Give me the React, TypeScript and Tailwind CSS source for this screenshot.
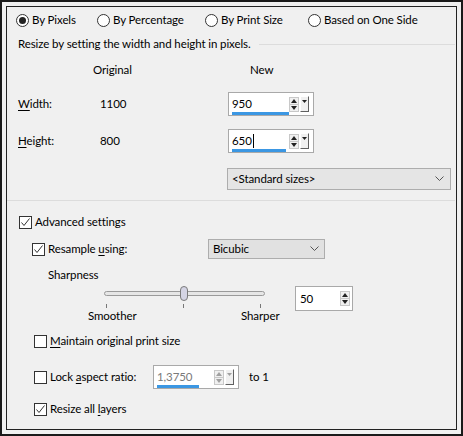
import type { ReactNode } from 'react'

function Radio({ checked, label, width }: { checked?: boolean; label: string; width: string }) {
  return (
    <div className={`flex items-center ${width}`}>
      <span className="w-[13px] h-[13px] rounded-full border border-[#333] bg-white flex items-center justify-center shrink-0">
        {checked && <span className="w-[7px] h-[7px] rounded-full bg-[#222]" />}
      </span>
      <span className="ml-[3px]">{label}</span>
    </div>
  )
}

function Check({ checked, children }: { checked?: boolean; children: ReactNode }) {
  return (
    <div className="flex items-center">
      <span className="w-[13px] h-[13px] border border-[#333] bg-white flex items-center justify-center shrink-0">
        {checked && (
          <svg width="11" height="11" viewBox="0 0 11 11">
            <path d="M1.5 5.5 L4 8.5 L9.5 1.5" fill="none" stroke="#333" strokeWidth="1" />
          </svg>
        )}
      </span>
      <span className="ml-[3px]">{children}</span>
    </div>
  )
}

function U({ children }: { children: ReactNode }) {
  return <span className="underline underline-offset-2">{children}</span>
}

function SpinArrows({ disabled }: { disabled?: boolean }) {
  const c = disabled ? '#a0a0a0' : '#222'
  return (
    <div className="flex flex-col w-[10px] h-[15px] border border-[#c8c8c8] bg-[#f0f0f0]">
      <div className="flex-1 flex items-center justify-center border-b border-[#c8c8c8]">
        <svg width="6" height="4" viewBox="0 0 6 4">
          <path d="M0 4 L3 0 L6 4 Z" fill={c} />
        </svg>
      </div>
      <div className="flex-1 flex items-center justify-center">
        <svg width="6" height="4" viewBox="0 0 6 4">
          <path d="M0 0 L3 4 L6 0 Z" fill={c} />
        </svg>
      </div>
    </div>
  )
}

function DropBtn({ disabled }: { disabled?: boolean }) {
  return (
    <div className="w-[9px] h-[16px] bg-[#f0f0f0] border-t border-l border-white border-r border-b border-r-[#606060] border-b-[#606060] flex justify-center pt-[3px]">
      <svg width="5" height="3" viewBox="0 0 5 3">
        <path d="M0 0 L2.5 3 L5 0 Z" fill={disabled ? '#a0a0a0' : '#222'} />
      </svg>
    </div>
  )
}

function SpinBox({ value, caret, disabled, bar }: { value: string; caret?: boolean; disabled?: boolean; bar: string }) {
  return (
    <div className="w-[86px] h-[24px] border border-[#a9a9a9] bg-white flex items-center pl-[3px] pr-[4px]">
      <div className="flex-1 flex flex-col h-full pt-[3px]">
        <div className={`h-[15px] flex items-center leading-none ${disabled ? 'text-[#7a7a7a]' : 'text-black'}`}>
          {value}
          {caret && <span className="w-px h-[14px] bg-black ml-px" />}
        </div>
        <div className={`h-[3px] mt-[1px] bg-[#3b97e3] ${bar}`} />
      </div>
      <div className="flex items-center gap-px">
        <SpinArrows disabled={disabled} />
        <DropBtn disabled={disabled} />
      </div>
    </div>
  )
}

function Chevron() {
  return (
    <svg width="9" height="6" viewBox="0 0 9 6">
      <path d="M0.5 0.5 L4.5 4.5 L8.5 0.5" fill="none" stroke="#555" strokeWidth="1" />
    </svg>
  )
}

export default function App() {
  return (
    <div className="w-[463px] h-[436px] bg-[#f0f0f0] border-2 border-[#1a1a1a] p-[4px] font-['Lato','Noto_Sans',sans-serif] text-[11.5px] tracking-[-0.1px] text-black">
      <div className="w-full h-full border border-[#222] flex flex-col">
        {/* mode radios */}
        <div className="h-[26px] flex items-center pl-[9px]">
          <Radio checked label="By Pixels" width="w-[81px]" />
          <Radio label="By Percentage" width="w-[108px]" />
          <Radio label="By Print Size" width="w-[103px]" />
          <Radio label="Based on One Side" width="w-auto" />
        </div>

        <div className="h-[22px] flex items-center pl-[11px]">
          <span>Resize by setting the width and height in pixels.</span>
          <div className="flex-1 border-t border-[#dcdcdc] ml-[8px] mr-[1px]" />
        </div>

        <div className="h-[30px] flex items-center">
          <span className="w-[243px] pl-[86px]">Original</span>
          <span>New</span>
        </div>

        <div className="h-[38px] flex items-center pl-[11px]">
          <span className="w-[82px]">
            <U>W</U>idth:
          </span>
          <span className="w-[128px]">1100</span>
          <SpinBox value="950" bar="w-[57px]" />
        </div>

        <div className="h-[36px] flex items-center pl-[11px]">
          <span className="w-[82px]">
            <U>H</U>eight:
          </span>
          <span className="w-[128px]">800</span>
          <SpinBox value="650" caret bar="w-[54px]" />
        </div>

        <div className="h-[39px] flex items-center pl-[220px] pr-[5px]">
          <div className="flex-1 h-[22px] bg-[#e5e5e5] border border-[#adadad] flex items-center justify-between pl-[4px] pr-[6px]">
            <span>&lt;Standard sizes&gt;</span>
            <Chevron />
          </div>
        </div>

        <div className="mt-[2px] border-t border-[#dcdcdc] mr-[1px]" />

        {/* advanced */}
        <div className="h-[22px] mt-[10px] flex items-center pl-[12px]">
          <Check checked>Advanced settings</Check>
        </div>

        <div className="h-[22px] mt-[5px] flex items-center pl-[25px]">
          <div className="w-[176px]">
            <Check checked>
              Resample <U>u</U>sing:
            </Check>
          </div>
          <div className="w-[117px] h-[20px] bg-[#e1e1e1] border border-[#adadad] flex items-center justify-between pl-[4px] pr-[5px]">
            <span>Bicubic</span>
            <Chevron />
          </div>
        </div>

        <div className="h-[20px] mt-[5px] flex items-center pl-[41px]">Sharpness</div>

        <div className="h-[40px] flex items-start pl-[81px]">
          <div className="w-[207px] flex flex-col">
            <div className="h-[17px] flex items-center pl-[16px]">
              <div className="w-[161px] h-[5px] rounded-full border border-[#9a9a9a] bg-[#e6e6e6] flex items-center">
                <div className="ml-[75px] w-[8px] h-[15px] rounded-[4px] border border-[#7a7a7a] bg-[#d4d4e4]" />
              </div>
            </div>
            <div className="h-[6px] flex items-end pl-[18px]">
              <span className="w-px h-[4px] bg-[#777]" />
              <span className="w-px h-[4px] bg-[#777] ml-[76px]" />
              <span className="w-px h-[4px] bg-[#777] ml-[76px]" />
            </div>
            <div className="h-[16px] flex items-center">
              <span className="w-[153px]">Smoother</span>
              <span>Sharper</span>
            </div>
          </div>
          <div className="mt-[1px] w-[58px] h-[25px] border border-[#a9a9a9] bg-white flex items-center pl-[4px] pr-[2px] justify-between">
            <span>50</span>
            <SpinArrows />
          </div>
        </div>

        <div className="h-[22px] mt-[5px] flex items-center pl-[27px]">
          <Check>
            <U>M</U>aintain original print size
          </Check>
        </div>

        <div className="h-[26px] mt-[12px] flex items-center pl-[27px]">
          <div className="w-[119px]">
            <Check>
              Lock <U>a</U>spect ratio:
            </Check>
          </div>
          <SpinBox value="1,3750" disabled bar="w-[42px]" />
          <span className="ml-[10px]">to 1</span>
        </div>

        <div className="h-[22px] mt-[8px] flex items-center pl-[27px]">
          <Check checked>
            Resize all <U>l</U>ayers
          </Check>
        </div>
      </div>
    </div>
  )
}
